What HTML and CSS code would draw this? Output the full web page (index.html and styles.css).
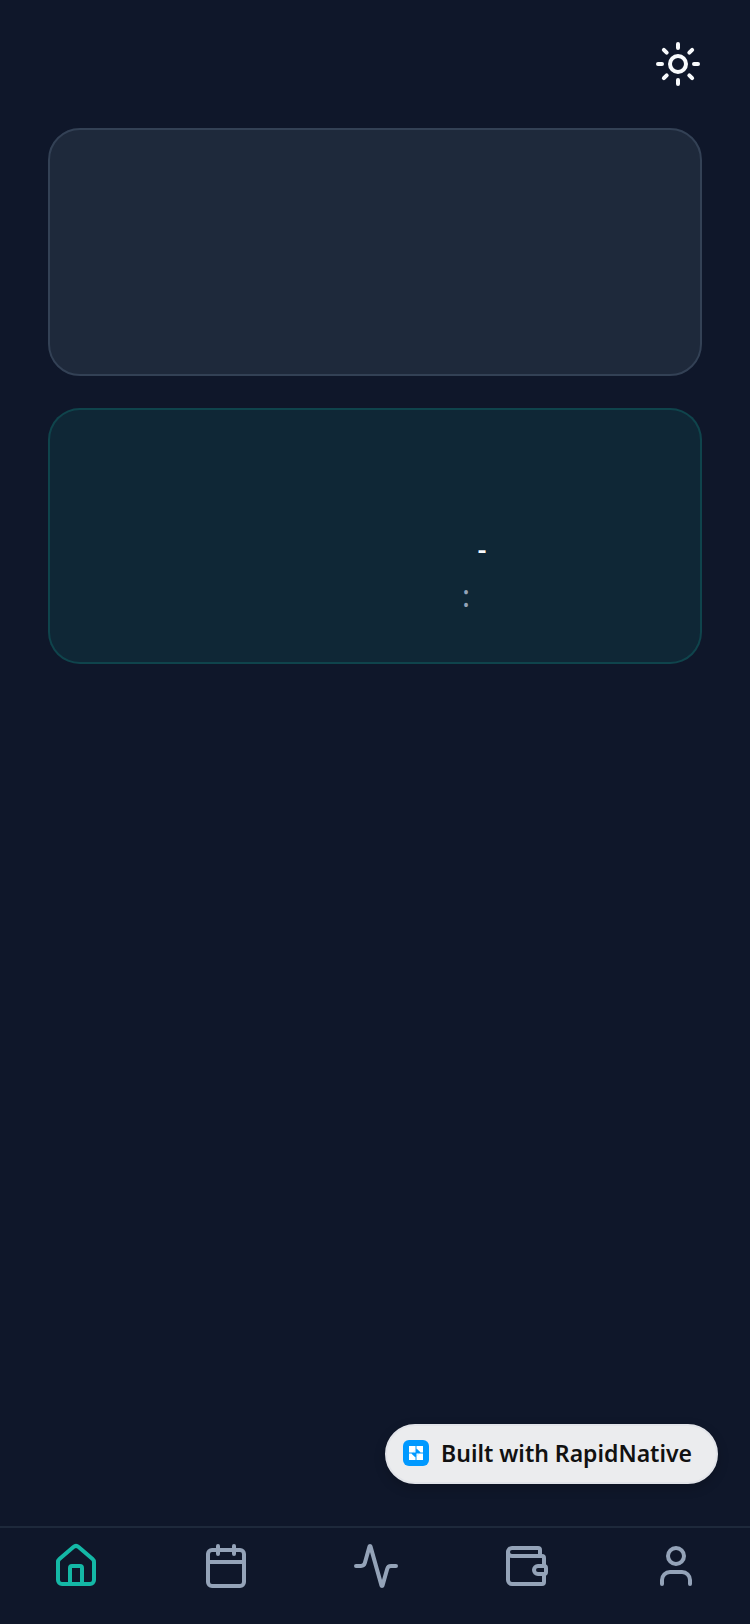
FILE: index.html
```
<!DOCTYPE html>
<html lang="en">
<head>
    <meta charset="UTF-8">
    <meta name="viewport" content="width=device-width, initial-scale=1.0">
    <title>Home</title>
    <link rel="stylesheet" href="styles.css">
</head>
<body>
    <header class="topbar">
        <button class="theme-btn" type="button" aria-label="Toggle theme">
            <svg class="icon" viewBox="0 0 24 24">
                <circle cx="12" cy="12" r="4"/>
                <path d="M12 2v2M12 20v2M4.93 4.93l1.41 1.41M17.66 17.66l1.41 1.41M2 12h2M20 12h2M6.34 17.66l-1.41 1.41M19.07 4.93l-1.41 1.41"/>
            </svg>
        </button>
    </header>

    <main class="content">
        <section class="card"></section>
        <section class="card card-accent">
            <p class="range">-</p>
            <p class="time">:</p>
        </section>
    </main>

    <a class="badge" href="#">
        <svg class="badge-logo" viewBox="0 0 26 26">
            <rect width="26" height="26" rx="6" fill="#0099ff"/>
            <path fill="#fff" d="M6 6h6.5v4L10 12.500H6zM13.500 6H20v6.500h-2.500L13.500 9zM6 13.500h2.500l4 3.500v3H6zM16 13.500h4V20h-6.500v-4z"/>
            <path fill="#fff" d="M10 12.500h2.500V10zM13.500 13.500H16L13.500 16z"/>
            <path fill="#0099ff" d="M13.500 8.500l4 4h-4zM8.500 13.500h4v4z"/>
        </svg>
        <span>Built with RapidNative</span>
    </a>

    <nav class="tabbar">
        <a class="tab active" href="#" aria-label="Home">
            <svg class="icon" viewBox="0 0 24 24">
                <path d="M15 21v-8a1 1 0 0 0-1-1h-4a1 1 0 0 0-1 1v8"/>
                <path d="M3 10a2 2 0 0 1 .709-1.528l7-5.999a2 2 0 0 1 2.582 0l7 5.999A2 2 0 0 1 21 10v9a2 2 0 0 1-2 2H5a2 2 0 0 1-2-2z"/>
            </svg>
        </a>
        <a class="tab" href="#" aria-label="Calendar">
            <svg class="icon" viewBox="0 0 24 24">
                <path d="M8 2v4M16 2v4M3 10h18"/>
                <rect x="3" y="4" width="18" height="18" rx="2"/>
            </svg>
        </a>
        <a class="tab" href="#" aria-label="Activity">
            <svg class="icon" viewBox="0 0 24 24">
                <path d="M22 12h-2.480a2 2 0 0 0-1.930 1.460l-2.350 8.360a.25.25 0 0 1-.48 0L9.240 2.180a.25.25 0 0 0-.48 0l-2.350 8.360A2 2 0 0 1 4.490 12H2"/>
            </svg>
        </a>
        <a class="tab" href="#" aria-label="Wallet">
            <svg class="icon" viewBox="0 0 24 24">
                <path d="M19 7V4a1 1 0 0 0-1-1H5a2 2 0 0 0 0 4h15a1 1 0 0 1 1 1v4h-3a2 2 0 0 0 0 4h3a1 1 0 0 0 1-1v-2a1 1 0 0 0-1-1"/>
                <path d="M3 5v14a2 2 0 0 0 2 2h15a1 1 0 0 0 1-1v-4"/>
            </svg>
        </a>
        <a class="tab" href="#" aria-label="Profile">
            <svg class="icon" viewBox="0 0 24 24">
                <path d="M19 21v-2a4 4 0 0 0-4-4H9a4 4 0 0 0-4 4v2"/>
                <circle cx="12" cy="7" r="4"/>
            </svg>
        </a>
    </nav>
</body>
</html>
```
FILE: styles.css
```
* {
    box-sizing: border-box;
}
body {
    margin: 0;
    min-height: 100vh;
    display: flex;
    flex-direction: column;
    background: #0f172a;
    color: #f8fafc;
    font-family: "Noto Sans", sans-serif;
}
.icon {
    display: block;
    width: 48px;
    height: 48px;
    fill: none;
    stroke: currentColor;
    stroke-width: 2;
    stroke-linecap: round;
    stroke-linejoin: round;
}
.topbar {
    display: flex;
    justify-content: flex-end;
    padding: 40px 48px;
}
.theme-btn {
    padding: 0;
    border: none;
    background: none;
    color: #f8fafc;
    cursor: pointer;
}
.content {
    flex: 1;
    display: flex;
    flex-direction: column;
    gap: 32px;
    padding: 0 48px;
}
.card {
    min-height: 248px;
    border: 2px solid #334155;
    border-radius: 32px;
    background: #1e293b;
}
.card-accent {
    min-height: 256px;
    padding: 118px 48px 0;
    border-color: rgba(20, 184, 166, 0.2);
    background: rgba(20, 184, 166, 0.1);
    text-align: center;
}
.card-accent p {
    margin: 0;
}
.range {
    padding-left: 214px;
    font-size: 28px;
    line-height: 40px;
    font-weight: 500;
}
.time {
    padding-left: 182px;
    color: #94a3b8;
    font-size: 30px;
    line-height: 56px;
}
.badge {
    align-self: flex-end;
    display: flex;
    align-items: center;
    gap: 12px;
    height: 60px;
    margin: 0 32px 42px 0;
    padding: 0 24px 2px 16px;
    border: 2px solid #e2e4e9;
    border-radius: 30px;
    background: #ebecee;
    box-shadow: 0 4px 12px rgba(0, 0, 0, 0.2);
    color: #111111;
    font-size: 23px;
    font-weight: 600;
    text-decoration: none;
}
.badge-logo {
    width: 26px;
    height: 26px;
}
.tabbar {
    display: flex;
    justify-content: space-between;
    height: 98px;
    padding: 14px 50px 0 52px;
    border-top: 2px solid #1e293b;
}
.tab {
    color: #94a3b8;
}
.tab.active {
    color: #14b8a6;
}
```
